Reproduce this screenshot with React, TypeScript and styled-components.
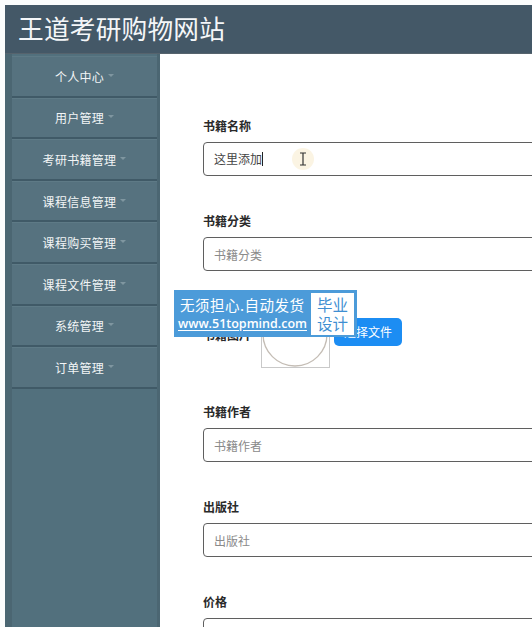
import React from "react";
import styled, { createGlobalStyle } from "styled-components";

const Global = createGlobalStyle`
  html, body { margin: 0; padding: 0; background: #fbfcfc; }
  body { font-family: "Noto Sans CJK SC", "Noto Sans", sans-serif; }
  * { box-sizing: border-box; }
`;

const Page = styled.div`
  height: 627px;
  padding: 5px 0 0 5px;
  overflow: hidden;
  display: flex;
  flex-direction: column;
`;

const Header = styled.header`
  height: 49px;
  flex: none;
  background: #445867;
  border-bottom: 1px solid #56636d;
  display: flex;
  align-items: center;
  padding-left: 13px;
`;

const Title = styled.h1`
  margin: 0;
  color: #f4f6f8;
  font-size: 25.7px;
  font-weight: 400;
  letter-spacing: 0.2px;
  line-height: 1;
  transform: translateY(-1px);
`;

const Body = styled.div`
  flex: 1;
  display: flex;
  min-height: 0;
`;

const Sidebar = styled.nav`
  width: 155px;
  flex: none;
  background: #52707d;
  padding: 2px 3px 0 7px;
  display: flex;
  flex-direction: column;
  box-shadow: inset 7px 0 0 #4b6672, inset -3px 0 0 #4b6672;
`;

const MenuItem = styled.div`
  height: 41.6px;
  background: #56727f;
  border-top: 1px solid #5e7a86;
  border-bottom: 2px solid #405a67;
  display: flex;
  align-items: center;
  justify-content: center;
  color: #f2f5f6;
  font-size: 12px;
  letter-spacing: 0.3px;
`;

const Caret = styled.span`
  display: inline-block;
  margin-left: 4px;
  width: 0;
  height: 0;
  border-left: 3px solid transparent;
  border-right: 3px solid transparent;
  border-top: 3px solid #7f96a0;
  transform: translateY(-1px);
`;

const Content = styled.main`
  flex: 1;
  background: #ffffff;
  padding: 63px 0 0 43px;
  position: relative;
  overflow: hidden;
`;

const Group = styled.div<{ $gap?: number }>`
  margin-bottom: ${(p) => p.$gap ?? 36}px;
`;

const Label = styled.div`
  font-size: 12px;
  font-weight: 700;
  color: #2a2a2a;
  line-height: 17px;
  margin-bottom: 8px;
`;

const InputBox = styled.div`
  width: 380px;
  height: 34px;
  border: 1.5px solid #5f5f5f;
  border-radius: 4px;
  display: flex;
  align-items: center;
  padding-left: 10px;
  font-size: 12px;
  color: #8a8a8a;
  position: relative;
`;

const Typed = styled.span`
  color: #444;
  border-right: 1px solid #222;
  line-height: 14px;
`;

const CursorMark = styled.div`
  position: absolute;
  left: 88px;
  top: 5px;
  width: 22px;
  height: 22px;
  border-radius: 50%;
  background: rgba(250, 240, 215, 0.7);
  display: flex;
  align-items: center;
  justify-content: center;
`;

const ImageRow = styled.div`
  display: flex;
  align-items: center;
  margin-bottom: 35px;
  margin-top: -7px;
`;

const RowLabel = styled(Label)`
  width: 58px;
  margin: 0;
`;

const Preview = styled.div`
  width: 69px;
  height: 68px;
  border: 1px solid #c9c9c9;
  position: relative;
  overflow: hidden;
  display: flex;
`;

const Choose = styled.button`
  margin-left: 4px;
  margin-top: -5px;
  height: 28px;
  width: 68px;
  border: none;
  border-radius: 5px;
  background: #1c8df3;
  color: #fff;
  font-family: inherit;
  font-size: 12px;
  padding: 0;
`;

const Watermark = styled.div`
  position: absolute;
  left: 14px;
  top: 236px;
  width: 183px;
  height: 47px;
  background: #4c9bd9;
  display: flex;
  align-items: center;
  padding: 0 3px 0 4px;
  gap: 4px;
`;

const WmText = styled.div`
  display: flex;
  flex-direction: column;
  color: #fff;
  flex: 1;
`;

const WmLine1 = styled.div`
  font-size: 14.5px;
  line-height: 21px;
  letter-spacing: 0.5px;
  padding-left: 2px;
`;

const WmLine2 = styled.div`
  font-family: "Open Sans", "Noto Sans", sans-serif;
  font-size: 12.5px;
  line-height: 18px;
  font-weight: 600;
  text-decoration: underline;
  text-underline-offset: 2px;
`;

const WmBadge = styled.div`
  background: #fff;
  color: #3f8fd2;
  width: 45px;
  height: 42px;
  font-size: 15.5px;
  line-height: 19px;
  display: flex;
  flex-direction: column;
  align-items: center;
  justify-content: center;
`;

const menus = [
  "个人中心",
  "用户管理",
  "考研书籍管理",
  "课程信息管理",
  "课程购买管理",
  "课程文件管理",
  "系统管理",
  "订单管理",
];

export default function App() {
  return (
    <>
      <Global />
      <Page>
        <Header>
          <Title>王道考研购物网站</Title>
        </Header>
        <Body>
          <Sidebar>
            {menus.map((m) => (
              <MenuItem key={m}>
                {m}
                <Caret />
              </MenuItem>
            ))}
          </Sidebar>
          <Content>
            <Group>
              <Label>书籍名称</Label>
              <InputBox>
                <Typed>这里添加</Typed>
                <CursorMark>
                  <svg width="8" height="14" viewBox="0 0 8 14">
                    <path d="M1 1h6M4 1v12M1 13h6" stroke="#333" strokeWidth="1.2" fill="none" />
                  </svg>
                </CursorMark>
              </InputBox>
            </Group>
            <Group>
              <Label>书籍分类</Label>
              <InputBox>书籍分类</InputBox>
            </Group>
            <ImageRow>
              <RowLabel>书籍图片</RowLabel>
              <Preview>
                <svg width="67" height="66" viewBox="0 0 67 66">
                  <path d="M1 33 A32 32 0 0 0 65 33" stroke="#c4bdb5" strokeWidth="1.3" fill="none" />
                </svg>
              </Preview>
              <Choose>选择文件</Choose>
            </ImageRow>
            <Group>
              <Label>书籍作者</Label>
              <InputBox>书籍作者</InputBox>
            </Group>
            <Group>
              <Label>出版社</Label>
              <InputBox>出版社</InputBox>
            </Group>
            <Group>
              <Label>价格</Label>
              <InputBox />
            </Group>
            <Watermark>
              <WmText>
                <WmLine1>无须担心.自动发货</WmLine1>
                <WmLine2>www.51topmind.com</WmLine2>
              </WmText>
              <WmBadge>
                <span>毕业</span>
                <span>设计</span>
              </WmBadge>
            </Watermark>
          </Content>
        </Body>
      </Page>
    </>
  );
}
